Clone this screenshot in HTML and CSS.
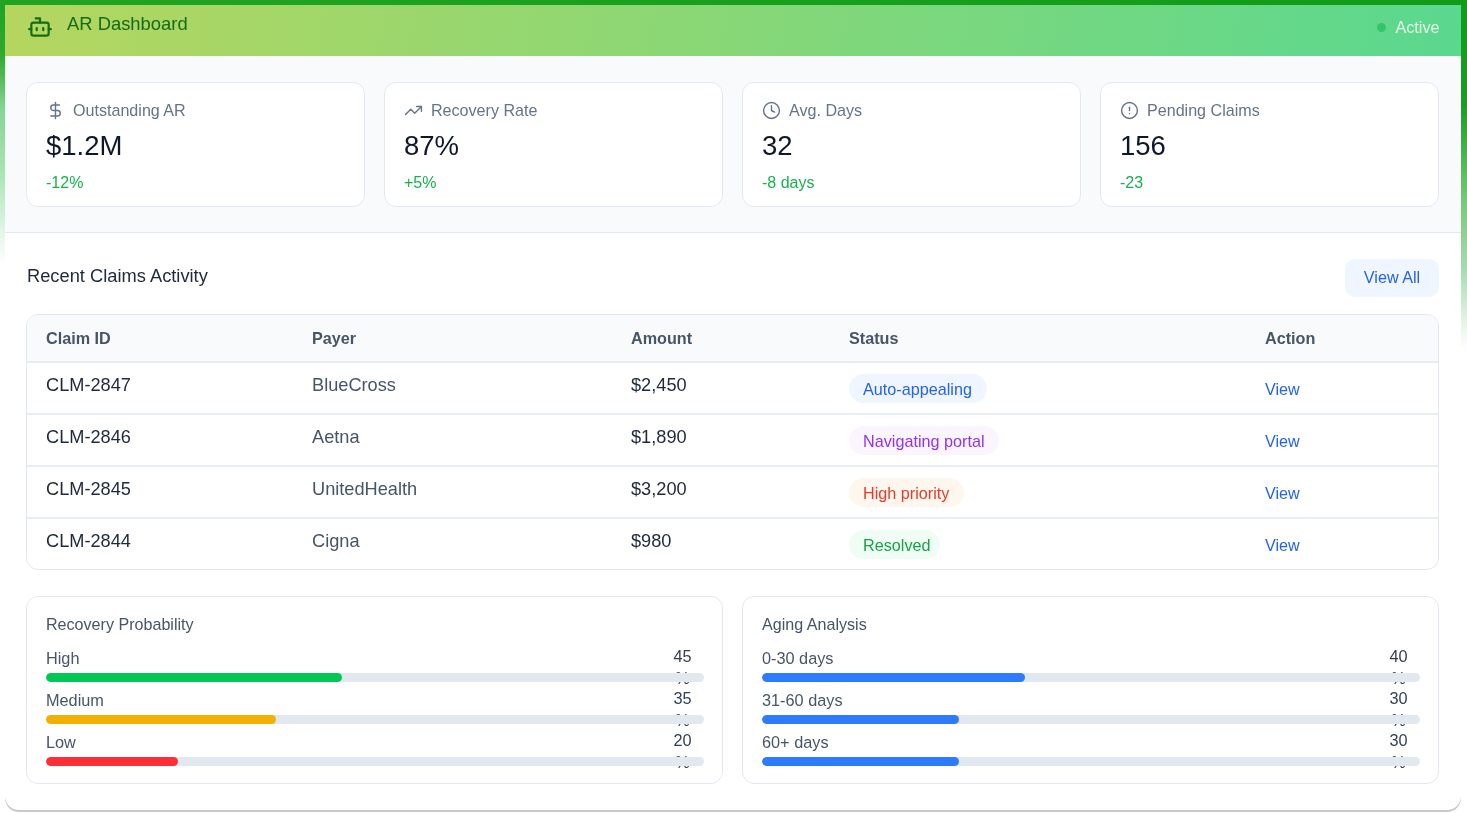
FILE: index.html
```html
<!DOCTYPE html>
<html lang="en">
<head>
<meta charset="utf-8">
<title>AR Dashboard</title>
<link rel="stylesheet" href="styles.css">
</head>
<body>
<div class="frame">
  <div class="panel">
    <header class="topbar">
      <div class="brand">
        <svg class="brand-icon" viewBox="0 0 24 24" fill="none" stroke="currentColor" stroke-width="2" stroke-linecap="round" stroke-linejoin="round"><path d="M12 8V4H8"/><rect x="4" y="8" width="16" height="12" rx="2"/><path d="M2 14h2"/><path d="M20 14h2"/><path d="M15 13v2"/><path d="M9 13v2"/></svg>
        <span class="brand-name">AR Dashboard</span>
      </div>
      <div class="status"><span class="dot"></span><span>Active</span></div>
    </header>

    <section class="stats">
      <div class="card">
        <div class="card-label"><svg class="ico" viewBox="0 0 24 24" fill="none" stroke="currentColor" stroke-width="1.8" stroke-linecap="round" stroke-linejoin="round"><path d="M12 2v20"/><path d="M17 5H9.5a3.5 3.5 0 0 0 0 7h5a3.5 3.5 0 0 1 0 7H6"/></svg><span>Outstanding AR</span></div>
        <div class="card-value">$1.2M</div>
        <div class="card-delta">-12%</div>
      </div>
      <div class="card">
        <div class="card-label"><svg class="ico" viewBox="0 0 24 24" fill="none" stroke="currentColor" stroke-width="1.8" stroke-linecap="round" stroke-linejoin="round"><path d="M22 7l-8.5 8.5-5-5L2 17"/><path d="M16 7h6v6"/></svg><span>Recovery Rate</span></div>
        <div class="card-value">87%</div>
        <div class="card-delta">+5%</div>
      </div>
      <div class="card">
        <div class="card-label"><svg class="ico" viewBox="0 0 24 24" fill="none" stroke="currentColor" stroke-width="1.8" stroke-linecap="round" stroke-linejoin="round"><circle cx="12" cy="12" r="10"/><path d="M12 6v6l4 2"/></svg><span>Avg. Days</span></div>
        <div class="card-value">32</div>
        <div class="card-delta">-8 days</div>
      </div>
      <div class="card">
        <div class="card-label"><svg class="ico" viewBox="0 0 24 24" fill="none" stroke="currentColor" stroke-width="1.8" stroke-linecap="round" stroke-linejoin="round"><circle cx="12" cy="12" r="10"/><path d="M12 8v4"/><path d="M12 16h.01"/></svg><span>Pending Claims</span></div>
        <div class="card-value">156</div>
        <div class="card-delta">-23</div>
      </div>
    </section>

    <main class="content">
      <div class="section-head">
        <h2 class="section-title">Recent Claims Activity</h2>
        <button class="view-all">View All</button>
      </div>

      <div class="table-wrap">
        <table class="claims">
          <thead>
            <tr><th class="c1">Claim ID</th><th class="c2">Payer</th><th class="c3">Amount</th><th class="c4">Status</th><th class="c5">Action</th></tr>
          </thead>
          <tbody>
            <tr><td class="id">CLM-2847</td><td class="payer">BlueCross</td><td class="id">$2,450</td><td class="cell-pill"><span class="pill blue">Auto-appealing</span></td><td class="cell-link"><a class="link">View</a></td></tr>
            <tr><td class="id">CLM-2846</td><td class="payer">Aetna</td><td class="id">$1,890</td><td class="cell-pill"><span class="pill purple">Navigating portal</span></td><td class="cell-link"><a class="link">View</a></td></tr>
            <tr><td class="id">CLM-2845</td><td class="payer">UnitedHealth</td><td class="id">$3,200</td><td class="cell-pill"><span class="pill red">High priority</span></td><td class="cell-link"><a class="link">View</a></td></tr>
            <tr><td class="id">CLM-2844</td><td class="payer">Cigna</td><td class="id">$980</td><td class="cell-pill"><span class="pill green">Resolved</span></td><td class="cell-link"><a class="link">View</a></td></tr>
          </tbody>
        </table>
      </div>

      <div class="charts">
        <div class="chart">
          <h3 class="chart-title">Recovery Probability</h3>
          <div class="metric"><div class="metric-head"><span>High</span><span class="metric-val">45 %</span></div><div class="track"><div class="fill f-green" style="width:45%"></div></div></div>
          <div class="metric"><div class="metric-head"><span>Medium</span><span class="metric-val">35 %</span></div><div class="track"><div class="fill f-amber" style="width:35%"></div></div></div>
          <div class="metric"><div class="metric-head"><span>Low</span><span class="metric-val">20 %</span></div><div class="track"><div class="fill f-red" style="width:20%"></div></div></div>
        </div>
        <div class="chart">
          <h3 class="chart-title">Aging Analysis</h3>
          <div class="metric"><div class="metric-head"><span>0-30 days</span><span class="metric-val">40 %</span></div><div class="track"><div class="fill f-blue" style="width:40%"></div></div></div>
          <div class="metric"><div class="metric-head"><span>31-60 days</span><span class="metric-val">30 %</span></div><div class="track"><div class="fill f-blue" style="width:30%"></div></div></div>
          <div class="metric"><div class="metric-head"><span>60+ days</span><span class="metric-val">30 %</span></div><div class="track"><div class="fill f-blue" style="width:30%"></div></div></div>
        </div>
      </div>
    </main>
  </div>
</div>
</body>
</html>
```
FILE: styles.css
```css
* { box-sizing: border-box; }
html, body { margin: 0; padding: 0; height: 100%; overflow: hidden; background: #fff; }
body { font-family: "Liberation Sans", Arial, sans-serif; color: #1e293b; }

.frame {
  height: 813px;
  padding: 5px 6px 3px 5px;
  filter: blur(0.35px);
  background-color: #fff;
  background-image:
    linear-gradient(90deg, #22a422 0, #119b18 100%),
    linear-gradient(180deg, #1ea324 0, #2fa92f 55px, #86d596 110px, #a8e2b4 170px, #e6f6e9 235px, #fff 265px),
    linear-gradient(180deg, #119b18 0, #17a020 105px, #72cc72 200px, #a6dcb0 270px, #e8f6ea 325px, #fff 350px);
  background-size: 100% 5px, 734px 100%, 734px 100%;
  background-position: left top, left top, right top;
  background-repeat: no-repeat;
}
.panel {
  height: 805px;
  background: #fff;
  border-radius: 0 0 14px 14px;
  overflow: hidden;
  box-shadow: 0 2px 0 #c9c9c9;
}

.topbar {
  height: 51px;
  padding: 0 21.5px 0 22px;
  display: flex;
  justify-content: space-between;
  align-items: flex-start;
  background: linear-gradient(100deg, #b5d65f 0%, #5ad88f 100%);
}
.brand { display: flex; align-items: flex-start; gap: 14px; color: #146c14; }
.brand-icon { width: 26px; height: 26px; margin-top: 9px; }
.brand-name { font-size: 18.4px; line-height: 20px; margin-top: 9px; }
.status { display: flex; align-items: center; gap: 9px; font-size: 16.2px; color: #e4f6e6; margin-top: 13px; }
.dot { width: 9px; height: 9px; border-radius: 50%; background: #34c46a; }

.stats {
  height: 177px;
  padding: 26px 22px 0 21px;
  display: grid;
  grid-template-columns: repeat(4, 1fr);
  gap: 19px;
  background: #f8fafc;
  border-bottom: 1px solid #e2e8f0;
  align-items: start;
}
.card {
  height: 125px;
  padding: 17px 18px 0 19px;
  background: #fff;
  border: 1px solid #e2e8f0;
  border-radius: 12px;
}
.card-label { display: flex; align-items: center; gap: 8px; color: #64748b; font-size: 16.1px; line-height: 20px; }
.ico { width: 19px; height: 19px; flex: none; }
.card-value { font-size: 27.5px; line-height: 32px; color: #0f172a; margin-top: 10px; }
.card-delta { font-size: 16px; line-height: 20px; color: #16b34f; margin-top: 11px; }

.content { padding: 26px 22px 0 21px; }
.section-head { display: flex; justify-content: space-between; align-items: flex-start; height: 55px; }
.section-title { margin: 5.5px 0 0 1px; font-size: 18.3px; line-height: 22px; font-weight: 400; color: #1e293b; }
.view-all {
  height: 38px; width: 94px;
  border: 0; border-radius: 10px;
  padding: 0 0 2px;
  background: #eff6ff; color: #2563eb;
  font: 16.2px "Liberation Sans", Arial, sans-serif;
}

.table-wrap { border: 1px solid #e2e8f0; border-radius: 12px; overflow: hidden; height: 256px; }
.claims { width: 100%; border-collapse: collapse; table-layout: fixed; }
.claims th {
  height: 47px; padding: 0 18px 0 19px; text-align: left;
  font-size: 16.2px; font-weight: 700; color: #475569;
  background: #f8fafc;
}
.claims td {
  height: 52px; padding: 12px 18px 0 19px;
  font-size: 18.2px; line-height: 21px;
  border-top: 2px solid #e8edf3;
  vertical-align: top;
}
.c1 { width: 266px; } .c2 { width: 319px; } .c3 { width: 218px; } .c4 { width: 416px; }
.id { color: #1e293b; }
.payer { color: #475569; }
.claims .cell-pill { padding-top: 11px; }
.claims .cell-link { padding-top: 16px; }
.pill { display: block; width: fit-content; height: 29px; line-height: 30px; padding: 0 15px 0 14px; border-radius: 14.5px; font-size: 16.2px; }
.blue { background: #eff6ff; color: #2563eb; }
.purple { background: #faf5ff; color: #9333ea; }
.red { background: #fff7ed; color: #ea3a2a; }
.green { background: #f0fdf4; color: #16a34a; padding-right: 9px; }
.link { display: block; color: #2563eb; font-size: 16.2px; }

.charts { display: grid; grid-template-columns: 1fr 1fr; gap: 19px; margin-top: 26px; }
.chart { height: 188px; padding: 17px 18px 0 19px; border: 1px solid #e2e8f0; border-radius: 12px; background: #fff; }
.chart-title { margin: 0 0 13px; font-size: 16.1px; line-height: 20px; font-weight: 400; color: #475569; }
.metric { height: 42px; }
.metric-head { display: flex; justify-content: space-between; height: 21px; font-size: 16.3px; line-height: 23px; color: #475569; padding-right: 12px; }
.metric-val { width: 19px; line-height: 22px; color: #334155; text-align: center; margin-top: -2px; height: 44px; }
.track { position: relative; height: 9px; margin-top: 4.5px; background: #e2e8f0; border-radius: 4.5px; overflow: hidden; }
.fill { height: 100%; border-radius: 4.5px; }
.f-green { background: #00c853; }
.f-amber { background: #f2b000; }
.f-red { background: #ff2d37; }
.f-blue { background: #2f7bff; }
```
